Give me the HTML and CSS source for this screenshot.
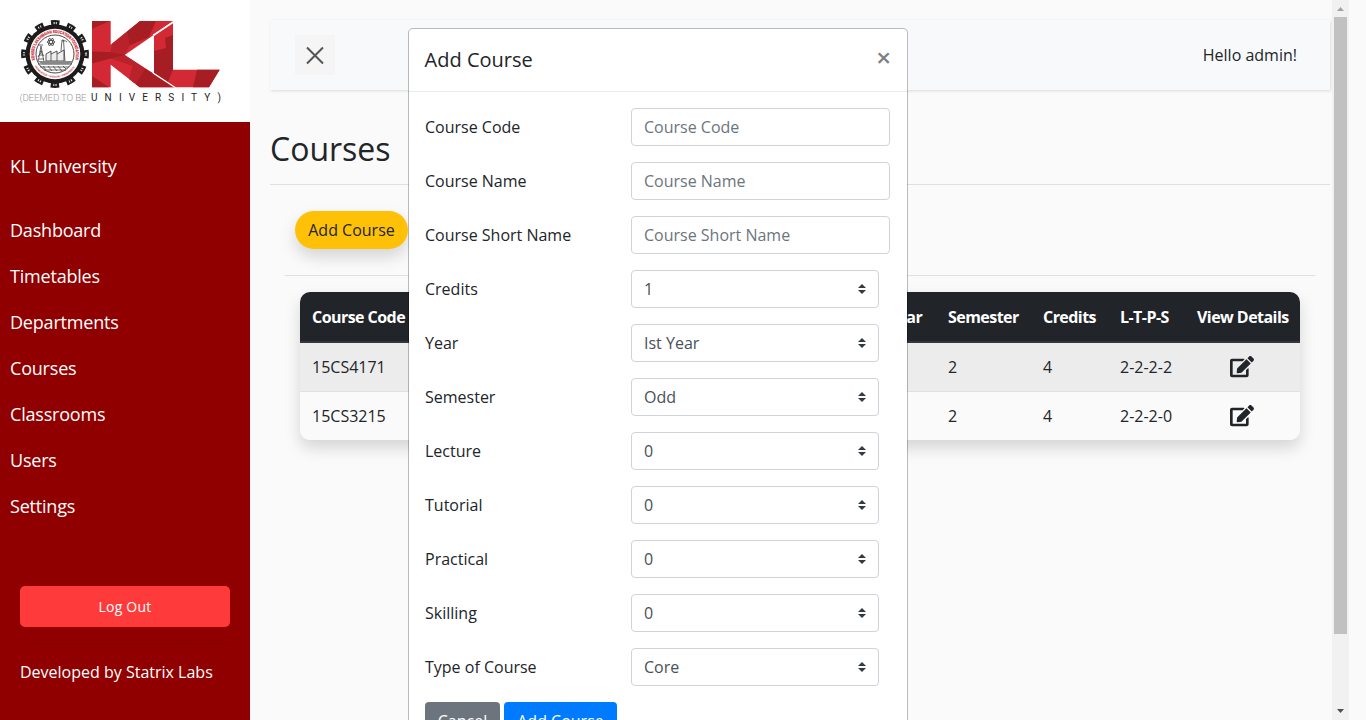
FILE: index.html
```html
<!DOCTYPE html>
<html lang="en">
<head>
<meta charset="utf-8">
<title>Courses</title>
<link rel="stylesheet" href="styles.css">
</head>
<body>
<div class="wrapper">
  <nav class="sidebar">
    <div class="logo">
      <svg width="250" height="122" viewBox="0 0 250 122">
        <g transform="translate(55 54)">
          <circle r="29.500" fill="#1d1b1c"/>
          <circle r="31" fill="none" stroke="#1d1b1c" stroke-width="5.800" stroke-dasharray="8.4 7.832" stroke-dashoffset="4.2"/>
          <circle r="31" fill="none" stroke="#e8e8e8" stroke-width="2.200" stroke-dasharray="1.1 1.2 1 12.932" stroke-dashoffset="1.7"/>
          <circle r="25.300" fill="#fff"/>
          <circle r="19" fill="#fff" stroke="#333" stroke-width=".9"/>
          <path id="ringTop" d="M-20 6A20.900 20.900 0 1 1 20 6" fill="none"/>
          <path id="ringLow" d="M-20.500 12A23.800 23.800 0 0 0 20.500 12" fill="none"/>
          <text class="ring-top"><textPath href="#ringTop" textLength="77" lengthAdjust="spacingAndGlyphs">KONERU LAKSHMAIAH EDUCATION FOUNDATION</textPath></text>
          <text class="ring-low"><textPath href="#ringLow" textLength="48" lengthAdjust="spacingAndGlyphs">KNOWLEDGE • WISDOM • PROSPERITY</textPath></text>
          <g fill="none" stroke="#444" stroke-width=".8">
            <path d="M-14 -8L-17 8M-14 -8L-11 8M-15 -3h2M-16 1h4M-16 5h5M-15 -3l4 5M-13 -3l-4 6M-17 -9h5"/>
            <path d="M-17 10H17M-15 13H14M-11 16H11"/>
            <path d="M-12 12l3 4M-7 12l4 5M-2 12l4 5M3 12l4 5M8 12l3 3"/>
            <path d="M6 -3L7 -14h1.5L10 8M7 -13q4 -1 5 1"/>
            <ellipse cx="-4" cy="-12" rx="4" ry="1.6"/>
            <ellipse cx="-4" cy="-12" rx="4" ry="1.6" transform="rotate(60 -4 -12)"/>
            <ellipse cx="-4" cy="-12" rx="4" ry="1.6" transform="rotate(120 -4 -12)"/>
          </g>
          <path d="M-9 7V0l5-3V0l6-3V0l7-4V7z" fill="#eee" stroke="#444" stroke-width=".9"/>
          <path d="M-4 0V7M2 0V7" stroke="#444" stroke-width=".8"/>
          <path d="M-17 7H18L14 10.500H-13z" fill="#888"/>
        </g>
        <path fill="#d32935" d="M92 21H110.700V44.700L140 21H174L124.700 55 175 87.200H139.700L110.700 64.700V87.200H92z"/>
        <path fill="#a61d23" d="M92 21H110L92 28.700zM92 51.500L124 52.500V55.500L110.700 58.500 92 63.500zM127 31.500L140 21h16L149 37l-19.500 8.500zM92 76L109 87.200H92zM145 68.500L175 87.200H139.700L135.500 84z"/>
        <path fill="#ba222b" d="M124.700 55L145 68.500 135.500 84 129 79 132.500 66 110.700 58.500zM112 43.700L127 31.500 129.500 45.500 124.700 55 110.700 52.500z"/>
        <path fill="#d32935" d="M154 36L173 23.300V69.700H219.700L209 87.200H174L154 72.700z"/>
        <path fill="#a61d23" d="M154 51L166 48 165 38 173 35V69.700L168 81.500 154 72.700zM197 69.700H219.700L209 87.200H193z"/>
        <path d="M153 35.300L175 20.600M153 73L175.500 87.800" stroke="#fff" stroke-width="1.300"/>
        <text x="19.500" y="101" class="deemed" textLength="67">(DEEMED TO BE</text>
        <text x="91" y="101" class="univ" textLength="130">UNIVERSITY)</text>
      </svg>
    </div>
    <div class="brand">KL University</div>
    <ul class="menu">
      <li>Dashboard</li><li>Timetables</li><li>Departments</li><li>Courses</li><li>Classrooms</li><li>Users</li><li>Settings</li>
    </ul>
    <div class="logout">Log Out</div>
    <div class="credit">Developed by Statrix Labs</div>
  </nav>

  <main class="content">
    <header class="topbar">
      <button class="toggle" aria-label="Toggle sidebar"><svg width="40" height="40" viewBox="0 0 40 40"><path d="M12 12.500L28 28.500M28 12.500L12 28.500" stroke="#555" stroke-width="2"/></svg></button>
      <span>Hello admin!</span>
    </header>
    <h2 class="title">Courses</h2>
    <section class="panel">
      <div class="actions"><button class="add">Add Course</button></div>
      <div class="table">
        <div class="row head"><span>Course Code</span><span></span><span>Year</span><span>Semester</span><span>Credits</span><span>L-T-P-S</span><span>View Details</span></div>
        <div class="row odd"><span>15CS4171</span><span></span><span></span><span>2</span><span>4</span><span>2-2-2-2</span><span class="edit"><svg class="pen" viewBox="0 0 576 512"><use href="#pen"/></svg></span></div>
        <div class="row"><span>15CS3215</span><span></span><span></span><span>2</span><span>4</span><span>2-2-2-0</span><span class="edit"><svg class="pen" viewBox="0 0 576 512"><use href="#pen"/></svg></span></div>
      </div>
    </section>
  </main>
</div>

<div class="overlay">
  <div class="modal">
    <div class="modal-head"><h5>Add Course</h5><span class="close">×</span></div>
    <form class="modal-body">
      <div class="field"><label>Course Code</label><input placeholder="Course Code"></div>
      <div class="field"><label>Course Name</label><input placeholder="Course Name"></div>
      <div class="field"><label>Course Short Name</label><input placeholder="Course Short Name"></div>
      <div class="field"><label>Credits</label><div class="select">1<svg class="caret" viewBox="0 0 4 5"><use href="#caret"/></svg></div></div>
      <div class="field"><label>Year</label><div class="select">Ist Year<svg class="caret" viewBox="0 0 4 5"><use href="#caret"/></svg></div></div>
      <div class="field"><label>Semester</label><div class="select">Odd<svg class="caret" viewBox="0 0 4 5"><use href="#caret"/></svg></div></div>
      <div class="field"><label>Lecture</label><div class="select">0<svg class="caret" viewBox="0 0 4 5"><use href="#caret"/></svg></div></div>
      <div class="field"><label>Tutorial</label><div class="select">0<svg class="caret" viewBox="0 0 4 5"><use href="#caret"/></svg></div></div>
      <div class="field"><label>Practical</label><div class="select">0<svg class="caret" viewBox="0 0 4 5"><use href="#caret"/></svg></div></div>
      <div class="field"><label>Skilling</label><div class="select">0<svg class="caret" viewBox="0 0 4 5"><use href="#caret"/></svg></div></div>
      <div class="field"><label>Type of Course</label><div class="select">Core<svg class="caret" viewBox="0 0 4 5"><use href="#caret"/></svg></div></div>
      <div class="buttons"><button type="button" class="btn gray">Cancel</button><button type="button" class="btn blue">Add Course</button></div>
    </form>
  </div>
  <div class="scrollbar">
    <svg width="17" height="17" viewBox="0 0 17 17"><path d="M5 11L8.500 7 12 11z" fill="#a3a3a3"/></svg>
    <div class="thumb"></div>
    <svg class="down" width="17" height="17" viewBox="0 0 17 17"><path d="M5 6h7L8.500 10z" fill="#505050"/></svg>
  </div>
</div>

<svg class="defs" width="0" height="0">
  <defs>
    <path id="caret" fill="#343a40" d="M2 0L0 2h4zm0 5L0 3h4z"/>
    <path id="pen" fill="#212529" d="M402.600 83.200l90.200 90.200c3.800 3.800 3.800 10 0 13.800L274.400 405.600l-92.800 10.300c-12.400 1.400-22.900-9.100-21.500-21.500l10.300-92.800L388.800 83.200c3.800-3.800 10-3.800 13.800 0zm162-22.900l-48.800-48.800c-15.200-15.200-39.900-15.200-55.200 0l-35.400 35.400c-3.800 3.800-3.800 10 0 13.800l90.200 90.200c3.800 3.800 10 3.800 13.800 0l35.400-35.400c15.200-15.300 15.200-40 0-55.200zM384 346.200V448H64V128h229.800c3.200 0 6.200-1.300 8.500-3.500l40-40c7.600-7.600 2.200-20.500-8.500-20.500H48C21.500 64 0 85.500 0 112v352c0 26.500 21.500 48 48 48h352c26.500 0 48-21.500 48-48V306.200c0-10.700-12.900-16-20.500-8.500l-40 40c-2.200 2.300-3.500 5.300-3.500 8.500z"/>
  </defs>
</svg>
</body>
</html>
```
FILE: styles.css
```css
* { box-sizing: border-box; }
html, body { height: 100%; margin: 0; overflow: hidden; }
body { background: #fafafa; color: #212529; font: 400 16px/24px "Open Sans", "Noto Sans", sans-serif; }
button, input { font: inherit; }
h2, h5 { margin: 0; font-weight: 400; }
.wrapper { display: flex; height: 720px; }

.sidebar { width: 250px; flex: none; background: #900000; color: #fff; display: flex; flex-direction: column; }
.logo { height: 122px; background: #fff; }
.logo svg { display: block; }
.ring-top { font: 700 4.300px "Liberation Sans", sans-serif; fill: #d32935; stroke: #d32935; stroke-width: .2px; }
.ring-low { font: 700 2.700px "Liberation Sans", sans-serif; fill: #d32935; }
.deemed { font: 300 9.800px "Roboto", "Liberation Sans", sans-serif; fill: #999; }
.univ { font: 400 10px "Roboto", "Liberation Sans", sans-serif; fill: #222; }
.brand { padding: 31px 10px 0; font-size: 18px; line-height: 27px; letter-spacing: -.17px; }
.menu { list-style: none; margin: 27px 0 0; padding: 0; font-size: 18px; letter-spacing: -.2px; }
.menu li { height: 46px; line-height: 46px; padding: 0 10px; }
.logout { margin: 57px 20px 0; height: 41px; line-height: 41px; border-radius: 5px; background: #ff3a3a; text-align: center; font-size: 14px; letter-spacing: .2px; }
.credit { margin: 16px 20px 0; padding-top: 16px; border-top: 1px solid #850000; }

.content { flex: 1; padding: 20px 36px 0 20px; }
.topbar { height: 70px; background: #f8f9fb; box-shadow: 1px 1px 3px rgba(0,0,0,.13); display: flex; align-items: center; justify-content: space-between; padding: 0 33px 0 25px; }
.toggle { width: 40px; height: 40px; border: 0; padding: 0; background: #f5f5f5; }
.toggle svg { display: block; }
.title { margin-top: 40px; height: 55px; font-size: 32px; line-height: 38px; border-bottom: 1px solid #e0e0e0; }
.panel { margin: 26px 15px 0; }
.actions { height: 65px; padding-left: 10px; border-bottom: 1px solid #e0e0e0; }
.add { width: 113px; height: 38px; border: 0; padding: 0; border-radius: 19px; background: #ffc107; color: #212529; box-shadow: 0 8px 16px rgba(0,0,0,.15); }
.table { margin: 16px 15px 0; border-radius: 10px; overflow: hidden; box-shadow: 0 8px 16px rgba(0,0,0,.15); }
.row { display: grid; grid-template-columns: 120px 456px 60px 95px 77px 77px 115px; height: 48px; line-height: 48px; background: #fafafa; }
.row span { padding-left: 12px; white-space: nowrap; }
.head { height: 51px; line-height: 51px; background: #212529; color: #fff; border-bottom: 2px solid #32383e; font-weight: 700; letter-spacing: -.55px; }
.row.odd { height: 49px; background: #ececec; border-bottom: 1px solid #dee2e6; }
.row .edit { display: flex; align-items: center; justify-content: center; padding: 0 1px 0 0; }
.row.head { height: 51px; }
.pen { width: 24px; height: 21.300px; }

.overlay { position: absolute; top: 0; left: 0; width: 1349px; height: 720px; overflow: hidden; display: flex; justify-content: flex-end; }
.modal { flex: none; width: 500px; height: 740px; margin: 28px 424px 0 0; background: #fff; border: 1px solid rgba(0,0,0,.25); border-radius: 5px; background-clip: padding-box; }
.modal-head { height: 63px; border-bottom: 1px solid #e9ecef; padding: 0 16px 0 15.600px; display: flex; justify-content: space-between; align-items: center; }
.modal-head h5 { font-size: 20px; line-height: 30px; }
.close { font-size: 26px; font-weight: 600; line-height: 24px; color: #7f7f7f; margin-top: -7px; }
.modal-body { padding: 16px 17px 0 16px; }
.field { display: flex; height: 38px; margin-bottom: 16px; }
.field label { width: 206px; line-height: 38px; flex: none; }
.field input, .select { height: 38px; border: 1px solid #ced4da; border-radius: 4px; padding: 0 12px; color: #495057; background: #fff; }
.field input { width: 259px; }
.field input::placeholder { color: #6c757d; opacity: 1; }
.select { width: 248px; display: flex; justify-content: space-between; align-items: center; }
.caret { width: 8px; height: 10px; }
.buttons { display: flex; gap: 4px; }
.btn { height: 38px; border: 0; border-radius: 4px; padding: 0; color: #fff; }
.gray { width: 75px; background: #6c757d; }
.blue { width: 113px; background: #007bff; }
.scrollbar { width: 17px; height: 720px; background: #f1f1f1; flex: none; display: flex; flex-direction: column; align-items: center; }
.scrollbar svg { display: block; flex: none; }
.thumb { width: 13px; height: 617px; background: #c1c1c1; }
.down { margin-top: auto; }
.defs { position: absolute; }
```
